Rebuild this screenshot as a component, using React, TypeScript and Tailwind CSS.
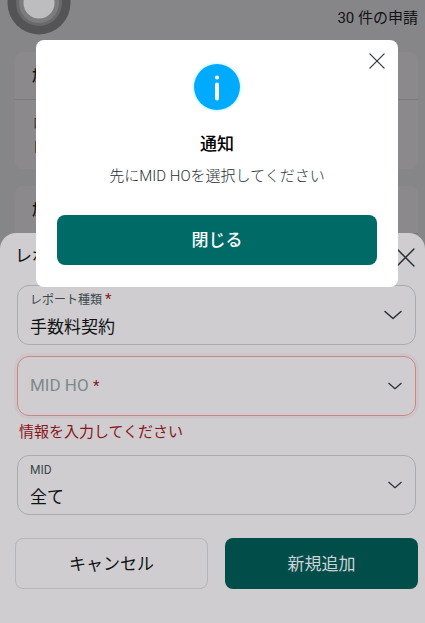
import { useState } from 'react';

const REPORT_TYPES = ['手数料契約'];

const CARDS = [
  { id: 1, title: '加盟店レポート', rows: ['口座情報', '日付'] },
  { id: 2, title: '加盟店レポート', rows: ['口座情報', '日付'] },
];

function CloseIcon({ className }: { className: string }) {
  return (
    <svg className={className} fill="none" viewBox="0 0 18 18" stroke="currentColor" aria-hidden="true">
      <path strokeLinecap="round" strokeWidth={1.4} d="M1 1l16 16M17 1L1 17" />
    </svg>
  );
}

function Chevron({ className }: { className: string }) {
  return (
    <svg className={className} fill="none" viewBox="0 0 18 10" stroke="currentColor" aria-hidden="true">
      <path strokeLinecap="round" strokeLinejoin="round" strokeWidth={1.5} d="M1 1.5l8 7 8-7" />
    </svg>
  );
}

export default function App() {
  const [reportType, setReportType] = useState(REPORT_TYPES[0]);
  const [midHo, setMidHo] = useState('');
  const [mid, setMid] = useState('全て');
  const [noticeOpen, setNoticeOpen] = useState(true);

  return (
    <div className="relative min-h-screen overflow-hidden bg-[#868688] font-['Roboto','Noto_Sans_CJK_JP',sans-serif] text-[#101214]">
      {/* Request list */}
      <main className="pl-[15px] pr-[7px]">
        <p className="flex h-[52px] justify-end pt-[7px] text-[15px] leading-[22px]">30 件の申請</p>
        <div className="space-y-[17px]">
          {CARDS.map((card) => (
            <section key={card.id} className="h-[117px] rounded-lg bg-[#8c898c]">
              <h2 className="h-[48px] border-b border-[#7b797c] px-[17px] text-[15px] font-medium leading-[48px]">
                {card.title}
              </h2>
              <div className="px-[18px] pt-[11px] text-[13px] leading-[24px] text-[#2b3033]">
                {card.rows.map((row) => (
                  <p key={row}>{row}</p>
                ))}
              </div>
            </section>
          ))}
        </div>
      </main>

      {/* Floating assist button */}
      <svg className="absolute left-[7px] -top-[29px] size-16" viewBox="0 0 64 64" aria-hidden="true">
        <circle cx="32" cy="32" r="31.5" fill="#545456" />
        <circle cx="32" cy="32" r="23" fill="#69696b" />
        <circle cx="32" cy="32" r="20" fill="#7c7c7e" />
        <circle cx="32" cy="32" r="15.5" fill="#bdbdbf" />
      </svg>

      {/* Report form sheet */}
      <form
        className="absolute inset-x-0 bottom-0 rounded-t-2xl bg-[#cfcdd0] pb-[34px] pl-[15px] pr-[7px]"
        onSubmit={(e) => e.preventDefault()}
      >
        <div className="mb-[4px] flex h-[48px] items-center justify-between pr-[3px]">
          <h1 className="text-[17px]">レポート新規追加</h1>
          <button type="button" aria-label="閉じる" className="text-[#263033]">
            <CloseIcon className="size-[19px]" />
          </button>
        </div>

        <div className="relative mx-[2px]">
          <label htmlFor="report-type" className="pointer-events-none absolute left-[13px] top-[6px] text-[12px] leading-[18px] text-[#3b484b]">
            レポート種類 <span className="text-[15px] leading-none text-[#8a1519]">*</span>
          </label>
          <select
            id="report-type"
            value={reportType}
            onChange={(e) => setReportType(e.target.value)}
            className="block h-[60px] w-full appearance-none rounded-xl border border-[#a7acae] pl-[12px] pt-[25px] text-[17px]"
          >
            {REPORT_TYPES.map((type) => (
              <option key={type}>{type}</option>
            ))}
          </select>
          <Chevron className="pointer-events-none absolute right-[14px] top-[25px] h-[10px] w-[18px] text-[#263033]" />
        </div>

        <div className="relative mx-[2px] mt-[11px]">
          <label htmlFor="mid-ho" className="pointer-events-none absolute left-[13px] top-[18px] text-[17px] leading-[22px] text-[#7e898a]">
            MID HO <span className="text-[15px] text-[#8a1519]">*</span>
          </label>
          <select
            id="mid-ho"
            value={midHo}
            onChange={(e) => setMidHo(e.target.value)}
            className="block h-[60px] w-full appearance-none rounded-xl border border-[#c98686] pl-[12px] shadow-[0_0_0_3px_#cfc4c7]"
          >
            <option value=""></option>
          </select>
          <Chevron className="pointer-events-none absolute right-[14px] top-[26px] h-[8px] w-[14px] text-[#263033]" />
        </div>
        <p className="mx-[4px] mt-[5px] text-[15px] leading-[22px] text-[#8a1519]">情報を入力してください</p>

        <div className="relative mx-[2px] mt-[12px]">
          <label htmlFor="mid" className="pointer-events-none absolute left-[13px] top-[6px] text-[12px] leading-[18px] text-[#3b484b]">
            MID
          </label>
          <select
            id="mid"
            value={mid}
            onChange={(e) => setMid(e.target.value)}
            className="block h-[60px] w-full appearance-none rounded-xl border border-[#a7acae] pl-[12px] pt-[25px] text-[17px]"
          >
            <option>全て</option>
          </select>
          <Chevron className="pointer-events-none absolute right-[14px] top-[26px] h-[8px] w-[14px] text-[#263033]" />
        </div>

        <div className="mt-[23px] grid grid-cols-2 gap-[17px]">
          <button type="button" className="h-[51px] rounded-lg border border-[#b4b6b9] pt-[2px] text-[17px]">
            キャンセル
          </button>
          <button type="submit" className="h-[51px] rounded-lg bg-[#004d4a] pt-[2px] text-[17px] text-[#cfd3d5]">
            新規追加
          </button>
        </div>
      </form>

      {/* Notice dialog */}
      {noticeOpen && (
        <div className="absolute inset-0 pl-[36px] pr-[27px] pt-[40px]">
          <div role="dialog" aria-labelledby="notice-title" className="relative rounded-lg bg-white px-[21px] pb-[22px] pt-[21px] text-center">
            <button
              type="button"
              aria-label="閉じる"
              onClick={() => setNoticeOpen(false)}
              className="absolute right-[13px] top-[13px] text-[#2f3d41]"
            >
              <CloseIcon className="size-4" />
            </button>
            <svg className="mx-auto size-[52px]" viewBox="0 0 52 52" aria-hidden="true">
              <circle cx="26" cy="26" r="25" fill="#e3fbff" />
              <circle cx="26" cy="26" r="23" fill="#00aaff" />
              <circle cx="26" cy="16.5" r="2.1" fill="#fff" />
              <rect x="24" y="21.5" width="4" height="18" rx="2" fill="#fff" />
            </svg>
            <h2 id="notice-title" className="mt-[19px] text-[17px] font-medium leading-[24px] text-black">
              通知
            </h2>
            <p className="mt-[9px] text-[15px] font-light leading-[22px] text-[#263033]">先にMID HOを選択してください</p>
            <button
              type="button"
              onClick={() => setNoticeOpen(false)}
              className="mt-[28px] h-[50px] w-full rounded-lg bg-[#006b66] pt-[2px] text-[17px] font-medium text-white"
            >
              閉じる
            </button>
          </div>
        </div>
      )}
    </div>
  );
}
